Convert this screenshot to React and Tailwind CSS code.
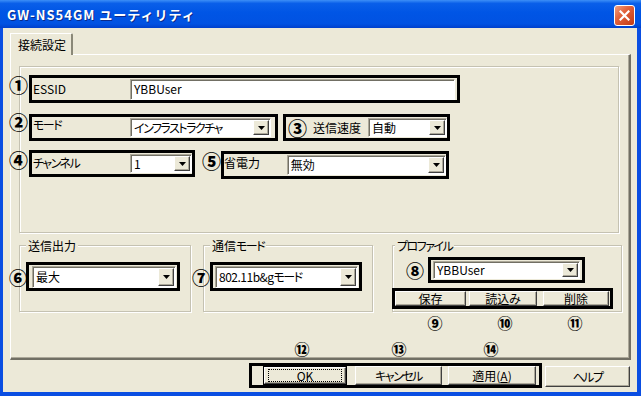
import React from 'react';

const raised = 'border border-t-white border-l-white border-r-[#404040] border-b-[#404040] shadow-[inset_-1px_-1px_0_#aca899]';
const sunken = 'border border-t-[#aca899] border-l-[#aca899] border-r-white border-b-white shadow-[inset_1px_1px_0_#716f64]';
const mark = 'border-[3px] border-black';

// katakana in the original UI font is much narrower than in Noto
function K({ children }) {
    return <span className="tracking-[-1.5px]">{children}</span>;
}

function Combo({ value, className }) {
    return (
        <div className={`flex items-stretch bg-white ${sunken} ${className}`}>
            <div className="flex-1 pl-[3px] flex items-center leading-none whitespace-nowrap overflow-hidden">{value}</div>
            <div className={`w-[16px] my-[1px] mr-[1px] flex items-center justify-center bg-[#ece9d8] ${raised}`}>
                <svg width="7" height="4" viewBox="0 0 7 4"><path d="M0 0h7L3.5 4z" fill="#000" /></svg>
            </div>
        </div>
    );
}

function Num({ children, className }) {
    return <span className={`font-black leading-none [font-feature-settings:normal] ${className}`}>{children}</span>;
}

function SmallNum({ children, className }) {
    return <span className={`w-[14px] h-[14px] flex items-center justify-center font-black leading-none text-[15px] [font-feature-settings:normal] ${className}`}>{children}</span>;
}

function Btn({ children, className }) {
    return (
        <div className={`flex items-center justify-center bg-[#ece9d8] leading-none ${raised} ${className}`}>
            {children}
        </div>
    );
}

function Group({ title, className, legend = 'ml-[6px]', children }) {
    return (
        <div className={`flex flex-col h-[67px] border border-[#c5c2b2] shadow-[1px_1px_0_white,inset_1px_1px_0_white] ${className}`}>
            <span className={`self-start -mt-[8px] px-[2px] h-[16px] leading-[16px] bg-[#ece9d8] ${legend}`}>{title}</span>
            {children}
        </div>
    );
}

export default function App() {
    return (
        <div className="w-[641px] h-[396px] bg-[#0a4ee2] flex flex-col overflow-hidden text-[12px] text-black font-['Noto_Sans_CJK_JP','Noto_Sans',sans-serif] [font-feature-settings:'palt']">
            {/* title bar */}
            <div className="h-[28px] flex items-start bg-[linear-gradient(180deg,#3d8ff7_0%,#0a5fe9_12%,#0055e5_45%,#0152e2_85%,#0040cc_100%)]">
                <span className="ml-[7px] mt-[7px] text-white font-bold text-[13px] leading-[16px] tracking-[1px] [font-feature-settings:normal] [text-shadow:1px_1px_0_#0a2a8a]">
                    GW-NS54GM ユーティリティ
                </span>
                <div className="ml-auto mr-[6px] mt-[5px] w-[21px] h-[21px] rounded-[3px] border border-white bg-[linear-gradient(135deg,#f0a080_0%,#e2623c_40%,#c23a14_100%)] flex items-center justify-center">
                    <svg width="11" height="11" viewBox="0 0 11 11">
                        <path d="M1.5 1.5l8 8M9.5 1.5l-8 8" stroke="#fff" strokeWidth="2.2" strokeLinecap="square" />
                    </svg>
                </div>
            </div>

            {/* body */}
            <div className="ml-[3px] mr-[4px] mb-[4px] flex-1 bg-[#ece9d8] pl-[7px] pt-[5px] flex flex-col">
                {/* tab */}
                <div className="relative z-10 -mb-[1px] w-[63px] h-[22px] bg-[#ece9d8] border-t border-l border-t-white border-l-white border-r-2 border-r-[#8a8878] rounded-tr-[2px] flex items-center pl-[7px] leading-none [font-feature-settings:normal]">
                    接続設定
                </div>

                {/* tab panel */}
                <div className="w-[621px] h-[306px] border-t border-l border-t-white border-l-white border-r-2 border-b-2 border-r-[#716f64] border-b-[#716f64] shadow-[inset_-1px_-1px_0_#aca899] flex flex-col">
                    {/* upper group */}
                    <div className="ml-[8px] mt-[11px] w-[600px] h-[167px] border border-[#c5c2b2] shadow-[1px_1px_0_white,inset_1px_1px_0_white] flex flex-col">
                        <div className="ml-[-11px] mt-[8px] flex items-start">
                            <Num className="w-[20px] text-[19px]">①</Num>
                            <div className={`w-[431px] h-[28px] flex items-center ${mark}`}>
                                <span className="w-[98px] pl-[1px]">ESSID</span>
                                <div className={`w-[325px] h-[21px] bg-white flex items-center pl-[3px] ${sunken}`}>YBBUser</div>
                            </div>
                        </div>

                        <div className="ml-[-11px] mt-[11px] flex items-start">
                            <Num className="w-[20px] text-[19px] -mt-[2px]">②</Num>
                            <div className={`w-[249px] h-[27px] flex items-center ${mark}`}>
                                <span className="w-[98px] pl-[1px] -mt-[5px]"><K>モード</K></span>
                                <Combo value={<K>インフラストラクチャ</K>} className="w-[141px] h-[19px]" />
                            </div>
                            <div className={`ml-[5px] w-[167px] h-[27px] flex items-center ${mark}`}>
                                <Num className="ml-[2px] text-[19px]">③</Num>
                                <span className="ml-[6px]">送信速度</span>
                                <Combo value="自動" className="ml-auto w-[79px] h-[19px]" />
                            </div>
                        </div>

                        <div className="ml-[-11px] mt-[9px] flex items-start">
                            <Num className="w-[20px] text-[19px]">④</Num>
                            <div className={`w-[166px] h-[27px] flex items-center ${mark}`}>
                                <span className="w-[98px] pl-[1px] -mt-[2px]"><K>チャンネル</K></span>
                                <Combo value="1" className="w-[62px] h-[19px]" />
                            </div>
                            <Num className="ml-[7px] w-[19px] text-[19px] mt-[1px]">⑤</Num>
                            <div className={`mt-[1px] w-[228px] h-[28px] flex items-center ${mark}`}>
                                <span className="w-[63px] -mt-[4px]">省電力</span>
                                <Combo value="無効" className="w-[160px] h-[20px]" />
                            </div>
                        </div>
                    </div>

                    {/* lower groups */}
                    <div className="ml-[8px] mt-[12px] flex items-start">
                        <Group title="送信出力" className="w-[172px] mr-[12px]">
                            <div className="ml-[-11px] mt-[8px] flex items-center">
                                <Num className="w-[17px] text-[18px]">⑥</Num>
                                <div className={`w-[154px] h-[29px] flex items-center pl-[3px] ${mark}`}>
                                    <Combo value="最大" className="w-[144px] h-[22px]" />
                                </div>
                            </div>
                        </Group>
                        <Group title={<>通信<K>モード</K></>} className="w-[170px] mr-[19px]">
                            <div className="ml-[-12px] mt-[8px] flex items-center">
                                <Num className="w-[18px] text-[18px]">⑦</Num>
                                <div className={`w-[152px] h-[29px] flex items-center pl-[2px] ${mark}`}>
                                    <Combo value={<span className="tracking-[-0.5px]">802.11b&g<K>モード</K></span>} className="w-[143px] h-[22px]" />
                                </div>
                            </div>
                        </Group>
                        <Group title={<K>プロファイル</K>} legend="ml-[2px]" className="w-[230px]">
                            <div className="ml-[13px] mt-[3px] flex items-center">
                                <Num className="w-[22px] text-[18px]">⑧</Num>
                                <div className={`w-[157px] h-[26px] flex items-center pl-[2px] ${mark}`}>
                                    <Combo value="YBBUser" className="w-[147px] h-[18px]" />
                                </div>
                            </div>
                            <div className={`ml-[-1px] mt-[5px] w-[221px] h-[21px] flex ${mark}`}>
                                <Btn className="w-[71px] h-full">保存</Btn>
                                <Btn className="ml-[3px] w-[68px] h-full">読込み</Btn>
                                <Btn className="ml-[6px] w-[66px] h-full">削除</Btn>
                            </div>
                        </Group>
                    </div>

                    <div className="ml-[417px] mt-[3px] flex">
                        <SmallNum>⑨</SmallNum>
                        <SmallNum className="ml-[56px]">⑩</SmallNum>
                        <SmallNum className="ml-[56px]">⑪</SmallNum>
                    </div>
                    <div className="ml-[284px] mt-[12px] flex">
                        <SmallNum>⑫</SmallNum>
                        <SmallNum className="ml-[83px]">⑬</SmallNum>
                        <SmallNum className="ml-[78px]">⑭</SmallNum>
                    </div>
                </div>

                {/* dialog buttons */}
                <div className="ml-[239px] mt-[3px] flex items-start">
                    <div className={`w-[293px] h-[25px] flex ${mark}`}>
                        <div className="ml-[11px] w-[84px] h-full border border-black flex">
                            <Btn className="flex-1">
                                <span className="w-[74px] h-[13px] border border-dotted border-black flex items-center justify-center">OK</span>
                            </Btn>
                        </div>
                        <Btn className="ml-[8px] w-[87px] h-full"><K>キャンセル</K></Btn>
                        <Btn className="ml-[6px] w-[88px] h-full">適用(<span className="underline">A</span>)</Btn>
                    </div>
                    <Btn className="ml-[3px] mt-[3px] w-[85px] h-[21px]"><K>ヘルプ</K></Btn>
                </div>
            </div>
        </div>
    );
}
